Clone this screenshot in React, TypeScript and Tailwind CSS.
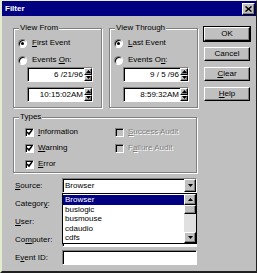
import React from "react";

const raised =
  "border border-t-white border-l-white border-b-black border-r-black shadow-[inset_-1px_-1px_0_#808080] bg-[#c0c0c0]";
const sunken =
  "border border-t-[#808080] border-l-[#808080] border-b-white border-r-white shadow-[inset_1px_1px_0_#000] bg-white";

function Up() {
  return (
    <svg width="5" height="3" viewBox="0 0 5 3">
      <path d="M2.5 0 L5 3 L0 3Z" fill="#000" />
    </svg>
  );
}

function Down() {
  return (
    <svg width="5" height="3" viewBox="0 0 5 3">
      <path d="M0 0 L5 0 L2.5 3Z" fill="#000" />
    </svg>
  );
}

function Radio({ checked, children }: { checked?: boolean; children: React.ReactNode }) {
  return (
    <div className="flex h-[12px] items-center gap-[5px]">
      <span className="flex h-[9px] w-[9px] items-center justify-center rounded-full border border-t-[#808080] border-l-[#808080] border-b-white border-r-white bg-white shadow-[inset_1px_1px_0_#000]">
        {checked && <span className="h-[3px] w-[3px] rounded-full bg-black" />}
      </span>
      <span>{children}</span>
    </div>
  );
}

function Check({
  checked,
  disabled,
  children,
}: {
  checked?: boolean;
  disabled?: boolean;
  children: React.ReactNode;
}) {
  return (
    <div className="flex h-[12px] items-center gap-[4px]">
      <span
        className={
          "flex h-[9px] w-[9px] items-center justify-center border border-t-[#808080] border-l-[#808080] border-b-white border-r-white shadow-[inset_1px_1px_0_#000] " +
          (disabled ? "bg-[#c0c0c0]" : "bg-white")
        }
      >
        {checked && (
          <svg width="7" height="7" viewBox="0 0 7 7">
            <path d="M1 3 L3 5 L6 1" stroke="#000" strokeWidth="1.6" fill="none" />
          </svg>
        )}
      </span>
      <span className={disabled ? "text-[#808080] [text-shadow:1px_1px_0_#fff]" : ""}>{children}</span>
    </div>
  );
}

function SpinField({ value }: { value: string }) {
  return (
    <div className={sunken + " ml-[9px] flex h-[15px] w-[66px]"}>
      <span className="flex-1 pr-[1px] text-right leading-[13px]">{value}</span>
      <div className="flex w-[8px] flex-col">
        <div className={raised + " flex flex-1 items-center justify-center"}>
          <Up />
        </div>
        <div className={raised + " flex flex-1 items-center justify-center"}>
          <Down />
        </div>
      </div>
    </div>
  );
}

function Group({
  title,
  className,
  children,
}: {
  title: string;
  className?: string;
  children: React.ReactNode;
}) {
  return (
    <fieldset
      className={
        "border border-[#808080] shadow-[inset_1px_1px_0_#fff,1px_1px_0_#fff] " + (className ?? "")
      }
    >
      <legend className="ml-[5px] bg-[#c0c0c0] px-[1px] leading-[10px]">{title}</legend>
      {children}
    </fieldset>
  );
}

function Btn({ children, def }: { children: React.ReactNode; def?: boolean }) {
  return (
    <div className={def ? "border border-black" : "p-[1px]"}>
      <div className={raised + " flex h-[14px] items-center justify-center"}>{children}</div>
    </div>
  );
}

const items = ["Browser", "buslogic", "busmouse", "cdaudio", "cdfs"];

export default function App() {
  return (
    <div className="h-[273px] w-[257px] border-t border-l-2 border-r border-b-2 border-t-[#e8eedc] border-l-[#e4ecd0] border-r-[#202020] border-b-[#202020] bg-[#c0c0c0] font-['Liberation_Sans',Arial,sans-serif] text-[8px] leading-[10px] text-black">
      {/* title bar */}
      <div className="flex h-[15px] items-center justify-between bg-[#000080] pl-[3px] pr-[1px]">
        <span className="text-[8px] font-bold text-white">Filter</span>
        <div className={raised + " flex h-[12px] w-[13px] items-center justify-center"}>
          <svg width="7" height="6" viewBox="0 0 7 6">
            <path d="M0.5 0.5 L6.5 5.5 M6.5 0.5 L0.5 5.5" stroke="#000" strokeWidth="1.5" />
          </svg>
        </div>
      </div>

      <div className="flex gap-[5px] pl-[11px] pt-[7px]">
        {/* left column */}
        <div className="flex w-[185px] flex-col">
          <div className="flex gap-[7px]">
            <Group title="View From" className="h-[85px] w-[89px]">
              <div className="flex flex-col pl-[4px] pt-[4px]">
                <Radio checked>
                  <span className="underline">F</span>irst Event
                </Radio>
                <div className="mt-[5px]">
                  <Radio>
                    Events <span className="underline">O</span>n:
                  </Radio>
                </div>
                <div className="mt-[1px] flex flex-col gap-[5px]">
                  <SpinField value="6 /21/96" />
                  <SpinField value="10:15:02AM" />
                </div>
              </div>
            </Group>
            <Group title="View Through" className="h-[85px] w-[89px]">
              <div className="flex flex-col pl-[4px] pt-[4px]">
                <Radio checked>
                  <span className="underline">L</span>ast Event
                </Radio>
                <div className="mt-[5px]">
                  <Radio>
                    Events O<span className="underline">n</span>:
                  </Radio>
                </div>
                <div className="mt-[1px] flex flex-col gap-[5px]">
                  <SpinField value="9 / 5 /96" />
                  <SpinField value="8:59:32AM" />
                </div>
              </div>
            </Group>
          </div>

          <Group title="Types" className="mt-[4px] h-[61px] w-[184px]">
            <div className="grid grid-cols-[90px_1fr] gap-y-[4px] pl-[11px] pt-[4px]">
              <Check checked>
                <span className="underline">I</span>nformation
              </Check>
              <Check disabled>
                <span className="underline">S</span>uccess Audit
              </Check>
              <Check checked>
                <span className="underline">W</span>arning
              </Check>
              <Check disabled>
                F<span className="underline">a</span>ilure Audit
              </Check>
              <Check checked>
                <span className="underline">E</span>rror
              </Check>
            </div>
          </Group>

          <div className="mt-[5px] grid grid-cols-[49px_135px] gap-y-[3px]">
            <span className="h-[15px] pl-[2px] leading-[15px]">
              <span className="underline">S</span>ource:
            </span>
            <div className="relative z-10">
              <div className={sunken + " flex h-[15px]"}>
                <span className="flex-1 pl-[2px] leading-[13px]">Browser</span>
                <div className={raised + " flex w-[12px] items-center justify-center"}>
                  <Down />
                </div>
              </div>
              {/* open dropdown list */}
              <div className="absolute left-0 top-full flex h-[51px] w-full border border-black bg-white">
                <div className="flex flex-1 flex-col pt-[1px]">
                  {items.map((it, i) => (
                    <span
                      key={it}
                      className={
                        "h-[10px] pl-[2px] leading-[9px] " +
                        (i === 0 ? "bg-[#000080] text-white" : "")
                      }
                    >
                      {it}
                    </span>
                  ))}
                </div>
                <div className="flex w-[12px] flex-col bg-[#e0e0e0]">
                  <div className={raised + " flex h-[11px] items-center justify-center"}>
                    <Up />
                  </div>
                  <div className={raised + " h-[9px]"} />
                  <div className="flex-1" />
                  <div className={raised + " flex h-[11px] items-center justify-center"}>
                    <Down />
                  </div>
                </div>
              </div>
            </div>

            <span className="h-[15px] pl-[2px] leading-[15px]">
              Categor<span className="underline">y</span>:
            </span>
            <div className={sunken + " h-[15px]"} />
            <span className="h-[15px] pl-[2px] leading-[15px]">
              <span className="underline">U</span>ser:
            </span>
            <div className={sunken + " h-[15px]"} />
            <span className="h-[15px] pl-[2px] leading-[15px]">
              Co<span className="underline">m</span>puter:
            </span>
            <div className={sunken + " h-[15px]"} />
            <span className="h-[15px] pl-[2px] leading-[15px]">
              E<span className="underline">v</span>ent ID:
            </span>
            <div className={sunken + " h-[15px]"} />
          </div>
        </div>

        {/* buttons */}
        <div className="mt-[3px] flex w-[48px] flex-col gap-[4px]">
          <Btn def>OK</Btn>
          <Btn>Cancel</Btn>
          <Btn>
            <span className="underline">C</span>lear
          </Btn>
          <Btn>
            <span className="underline">H</span>elp
          </Btn>
        </div>
      </div>
    </div>
  );
}
